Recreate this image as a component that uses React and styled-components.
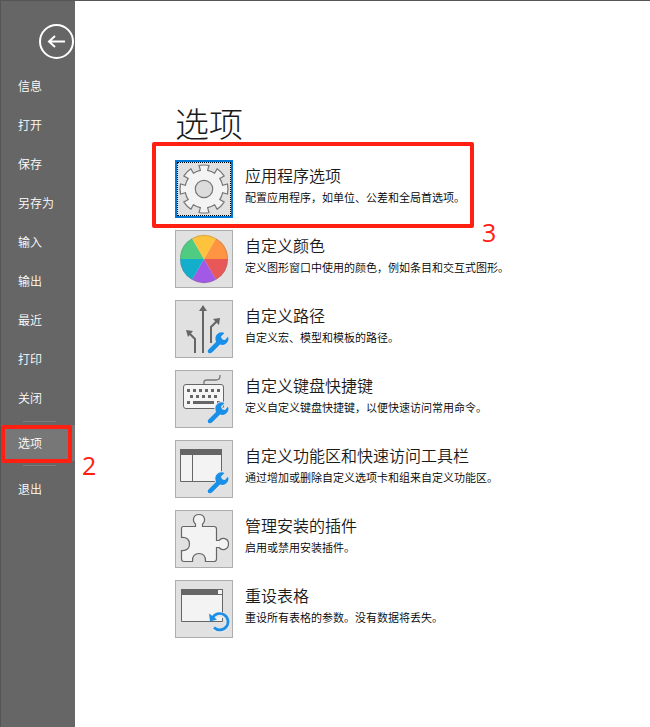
import React from 'react';
import styled, { createGlobalStyle } from 'styled-components';

const GlobalStyle = createGlobalStyle`
  * {
    box-sizing: border-box;
  }
  body {
    margin: 0;
    background: #fff;
    font-family: "Noto Sans CJK SC", sans-serif;
  }
`;

const Page = styled.div`
  display: flex;
  min-height: 100vh;
  border-top: 1px solid #555;
`;

const Sidebar = styled.nav`
  display: flex;
  flex-direction: column;
  flex: 0 0 75px;
  padding-top: 23px;
  border-left: 1px solid #555;
  background: #666;
`;

const BackButton = styled.button`
  align-self: flex-end;
  width: 36px;
  height: 36px;
  margin-bottom: 6px;
  padding: 0;
  border: 0;
  background: none;
`;

const NavItem = styled.button`
  position: relative;
  height: ${props => (props.$active ? '36px' : '39px')};
  padding: 0 0 0 17px;
  border: 0;
  background: ${props => (props.$active ? '#777' : 'none')};
  color: #fff;
  font-family: "Noto Sans CJK SC", sans-serif;
  font-size: 12px;
  font-weight: 350;
  line-height: 18px;
  text-align: left;
`;

const Divider = styled.hr`
  width: 33px;
  height: 1px;
  margin: 4px 0 3px 22px;
  border: 0;
  background: #7d7d7d;
`;

const Main = styled.main`
  flex: 1;
  min-width: 0;
  padding: 97px 24px 24px 100px;
  color: #1a1a1a;
`;

const Title = styled.h1`
  margin: 0 0 12px;
  font-size: 34px;
  font-weight: 300;
  line-height: 50px;
`;

const OptionList = styled.ul`
  display: flex;
  flex-direction: column;
  gap: 12px;
  margin: 0;
  padding: 0;
  list-style: none;
`;

const Option = styled.li`
  position: relative;
  display: flex;
  gap: 12px;
`;

const Tile = styled.button`
  flex: none;
  width: 58px;
  height: 58px;
  padding: 0;
  border: ${props => (props.$focused ? '2px solid #0078d7' : '1px solid #adadad')};
  outline: ${props => (props.$focused ? '1px dotted #000' : 'none')};
  outline-offset: -3px;
  background: #e1e1e1;
`;

const Icon = styled.svg`
  display: block;
  width: 58px;
  height: 58px;
  margin: ${props => (props.$focused ? '-2px' : '-1px')};
`;

const OptionText = styled.div`
  padding-top: 3px;
`;

const OptionName = styled.h2`
  margin: 0;
  font-size: 16px;
  font-weight: 350;
  line-height: 24px;
`;

const OptionInfo = styled.p`
  margin: 2px 0 0;
  color: #000;
  font-size: 11px;
  font-weight: 350;
  line-height: 16px;
`;

// Red step markers drawn over the menu
const Frame = styled.span`
  position: absolute;
  top: ${props => props.$top}px;
  left: ${props => props.$left}px;
  width: ${props => props.$width}px;
  height: ${props => props.$height}px;
  border: 4px solid #ff2012;
  border-radius: 2px;
  pointer-events: none;
`;

const Step = styled.span`
  position: absolute;
  top: ${props => props.$top}px;
  left: ${props => props.$left}px;
  color: #ff2012;
  font-family: "Open Sans", sans-serif;
  font-size: 25px;
  font-weight: 400;
  line-height: 30px;
`;

const point = (radius, degrees) => {
  const angle = (degrees * Math.PI) / 180;
  return `${(29 + radius * Math.sin(angle)).toFixed(2)} ${(29 - radius * Math.cos(angle)).toFixed(2)}`;
};

const gearPath = [0, 45, 90, 135, 180, 225, 270, 315]
  .map((a, i) => [
    `${i ? 'L' : 'M'}${point(24, a - 12)}`,
    `A24 24 0 0 1 ${point(24, a + 12)}`,
    `L${point(19, a + 11)}`,
    `A19 19 0 0 1 ${point(19, a + 34)}`,
  ].join(' '))
  .join(' ') + 'Z';

const slices = ['#ff9442', '#e85858', '#a259e6', '#12aecb', '#50cc82', '#ffc23d'];

const Wrench = () => (
  <path
    d="M33 50 41 42Q39 36 43 33.5Q46 31.500 49.500 33L46 36.500Q46.500 40 50 40L53 36.500Q54.500 41 50.500 44Q48 45.500 45 44.500L37.500 52Q35.500 54 33.500 53Q32 51.500 33 50Z"
    fill="#1a8fe8" stroke="#e6e6e6" strokeWidth="2" paintOrder="stroke"
  />
);

const Gear = () => (
  <g fill="#f3f3f3" stroke="#767676" strokeWidth="1.2">
    <path d={gearPath} />
    <circle cx="29" cy="29" r="8.7" fill="#dcdcdc" />
  </g>
);

const Wheel = () => (
  <g>
    {slices.map((color, i) => (
      <path
        key={color}
        d={`M29 29L${point(24, 30 + i * 60)}A24 24 0 0 1 ${point(24, 90 + i * 60)}Z`}
        fill={color}
      />
    ))}
    <circle cx="29" cy="29" r="23.5" fill="none" stroke="#777" strokeOpacity=".35" />
  </g>
);

const Paths = () => (
  <g>
    <path d="M28 53V9M20 53V39L14 33M36 43V27L42 21" fill="none" stroke="#666" strokeWidth="2" />
    <path d="M28 5 32 11H24ZM11 30 18 31 13 37ZM45 18 44 25 38 19Z" fill="#666" />
    <Wrench />
  </g>
);

const Keyboard = () => (
  <g>
    <path d="M29 14V12Q29 10 32 10H41Q45 10 45 6V5" fill="none" stroke="#777" strokeWidth="1.3" />
    <rect x="8.5" y="14.5" width="40" height="24" rx="2.5" fill="#f5f5f5" stroke="#666" />
    <path d="M12 20.500H46" stroke="#666" strokeWidth="3" strokeDasharray="3 3" />
    <path d="M15 26.500H43" stroke="#666" strokeWidth="3" strokeDasharray="3 3" />
    <path d="M12 32.500H15M18 32.500H39M42 32.500H45" stroke="#666" strokeWidth="3" />
    <Wrench />
  </g>
);

const Ribbon = () => (
  <g>
    <path d="M5.5 9.5H46.5V41.5H5.5ZM17.5 14V41" fill="#f3f3f3" stroke="#666" />
    <path d="M5 9H47V15H5Z" fill="#666" />
    <Wrench />
  </g>
);

const Puzzle = () => (
  <path
    d="M8.5 16.5H20.5V14C17 11 18 4.5 24 4.5S31 11 27.5 14V16.5H39Q41.5 16.5 41.5 19V30.5H44C47 27 53.5 28 53.5 34S47 41 44 37.5H41.5V49Q41.5 51.5 39 51.5H30.5C31 46 28 43.5 24 43.5S17 46 17.5 51.5H9Q6.5 51.5 6.5 49V40.5C12 41 14.5 38 14.5 34S12 27 6.5 27.5V18.5Q6.5 16.5 8.5 16.5Z"
    fill="#f3f3f3" stroke="#666" strokeWidth="1.2"
  />
);

const Reset = () => (
  <g>
    <path d="M6.5 9.5H47.5V41.5H6.5Z" fill="#f3f3f3" stroke="#666" />
    <path d="M6 9H48V15H6Z" fill="#666" />
    <path d="M43 10H47V14H43Z" fill="#f3f3f3" />
    <path d="M37.5 38A8.2 8.2 0 1 1 38 48" fill="none" stroke="#e6e6e6" strokeWidth="5" />
    <path d="M37.5 38A8.2 8.2 0 1 1 39 47.500" fill="none" stroke="#1a8fe8" strokeWidth="2.7" />
    <path d="M34 33.500 35 41.500 42 39.500Z" fill="#1a8fe8" />
  </g>
);

const navItems = ['信息', '打开', '保存', '另存为', '输入', '输出', '最近', '打印', '关闭'];

const options = [
  { name: '应用程序选项', info: '配置应用程序，如单位、公差和全局首选项。', Art: Gear, focused: true },
  { name: '自定义颜色', info: '定义图形窗口中使用的颜色，例如条目和交互式图形。', Art: Wheel },
  { name: '自定义路径', info: '自定义宏、模型和模板的路径。', Art: Paths },
  { name: '自定义键盘快捷键', info: '定义自定义键盘快捷键，以便快速访问常用命令。', Art: Keyboard },
  { name: '自定义功能区和快速访问工具栏', info: '通过增加或删除自定义选项卡和组来自定义功能区。', Art: Ribbon },
  { name: '管理安装的插件', info: '启用或禁用安装插件。', Art: Puzzle },
  { name: '重设表格', info: '重设所有表格的参数。没有数据将丢失。', Art: Reset },
];

function App () {
  return (
    <Page lang="zh-CN">
      <GlobalStyle />
      <Sidebar>
        <BackButton aria-label="返回">
          <svg width="36" height="36" viewBox="0 0 36 36" fill="none" stroke="#fff" strokeWidth="2">
            <circle cx="17.5" cy="17.5" r="16.5" />
            <path d="M26 17.500H10M16 12 10 17.500 16 23" />
          </svg>
        </BackButton>
        {navItems.map(item => (
          <NavItem key={item}>{item}</NavItem>
        ))}
        <Divider />
        <NavItem $active>
          选项
          <Frame $top={0} $left={0} $width={71} $height={38} />
          <Step $top={25} $left={81} aria-hidden="true">2</Step>
        </NavItem>
        <Divider />
        <NavItem>退出</NavItem>
      </Sidebar>
      <Main>
        <Title>选项</Title>
        <OptionList>
          {options.map(({ name, info, Art, focused }, index) => (
            <Option key={name}>
              <Tile $focused={focused} aria-labelledby={`option-${index}`}>
                <Icon $focused={focused} viewBox="0 0 58 58" aria-hidden="true">
                  <Art />
                </Icon>
              </Tile>
              <OptionText>
                <OptionName id={`option-${index}`}>{name}</OptionName>
                <OptionInfo>{info}</OptionInfo>
              </OptionText>
              {focused && (
                <>
                  <Frame $top={-18} $left={-23} $width={322} $height={86} />
                  <Step $top={57} $left={307} aria-hidden="true">3</Step>
                </>
              )}
            </Option>
          ))}
        </OptionList>
      </Main>
    </Page>
  );
};

export default App;
